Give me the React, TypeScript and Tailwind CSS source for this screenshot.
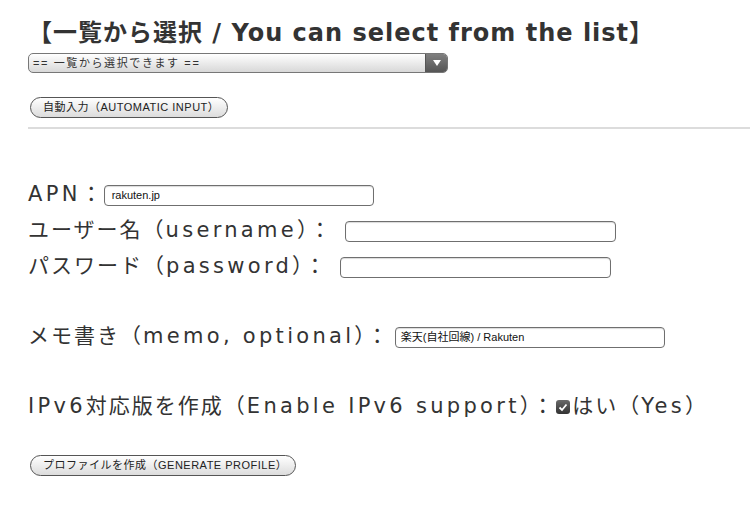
import React from "react";

const labelFont = { fontFamily: '"DejaVu Sans", "Noto Sans CJK JP", sans-serif' };
const ctrlFont = { fontFamily: '"Liberation Sans", "Noto Sans CJK JP", sans-serif' };

function TextBox({ cls, value }: { cls: string; value?: string }) {
  return (
    <div
      className={`${cls} h-[21px] shrink-0 rounded-[4px] border border-[#6f6f6f] bg-white shadow-[inset_0_1px_1px_rgba(0,0,0,0.15)] flex items-center text-[11px] text-[#111] tracking-normal`}
      style={ctrlFont}
    >
      {value}
    </div>
  );
}

function PillButton({ w, children }: { w: string; children: React.ReactNode }) {
  return (
    <div
      className={`${w} h-[21px] rounded-full border border-[#555] bg-gradient-to-b from-white to-[#dcdcdc] flex items-center pl-[12px] text-[11px] tracking-[0.5px] text-[#222] whitespace-nowrap`}
      style={ctrlFont}
    >
      {children}
    </div>
  );
}

function L({ children }: { children: React.ReactNode }) {
  return <span className="tracking-[3.3px]">{children}</span>;
}

export default function App() {
  return (
    <div className="w-[750px] h-[506px] bg-white text-[#333] overflow-hidden" style={labelFont}>
      <div className="pt-[17px] pl-[28px]">
        <h1 className="text-[24px] font-bold leading-[32px] tracking-[1px] whitespace-nowrap">
          【一覧から選択 / You can select from the list】
        </h1>
        <div className="mt-[4px] w-[420px] h-[20px] rounded-[5px] border border-[#777] bg-gradient-to-b from-white to-[#d8d8d8] flex overflow-hidden">
          <div className="flex-1 flex items-center pl-[4px] text-[11px] tracking-[1.6px] text-[#333] whitespace-nowrap" style={ctrlFont}>
            == 一覧から選択できます ==
          </div>
          <div className="w-[22px] h-full bg-gradient-to-b from-[#808080] to-[#555] border-l border-[#555] flex items-center justify-center">
            <svg width="8" height="6" viewBox="0 0 8 6">
              <path d="M0 0 H8 L4 6 Z" fill="#fff" />
            </svg>
          </div>
        </div>
        <div className="mt-[24px] ml-[2px]">
          <PillButton w="w-[198px]">自動入力（AUTOMATIC INPUT）</PillButton>
        </div>
      </div>
      <div className="mt-[9px] ml-[28px] h-[2px] bg-[#dcdcdc]" />

      <div className="pl-[28px] mt-[48px] text-[21px] tracking-[2px] whitespace-nowrap">
        <div className="flex items-center h-[36px]">
          <span>
            <L>APN</L>：
          </span>
          <TextBox cls="ml-[0px] w-[270px] pl-[7px]" value="rakuten.jp" />
        </div>
        <div className="flex items-center h-[36px]">
          <span>
            ユーザー名（<L>username</L>）：
          </span>
          <TextBox cls="ml-[13px] w-[271px]" />
        </div>
        <div className="flex items-center h-[36px]">
          <span>
            パスワード（<L>password</L>）：
          </span>
          <TextBox cls="ml-[12px] w-[271px]" />
        </div>
        <div className="flex items-center h-[36px] mt-[34px]">
          <span>
            メモ書き（<L>memo, optional</L>）：
          </span>
          <TextBox cls="ml-[5px] w-[270px] pl-[5px]" value="楽天(自社回線) / Rakuten" />
        </div>
        <div className="flex items-center h-[36px] mt-[34px]">
          <span>
            <L>IPv6</L>対応版を作成（<L>Enable IPv6 support</L>）：
          </span>
          <span className="ml-[1px] inline-flex shrink-0 w-[14px] h-[14px] rounded-[3px] bg-gradient-to-b from-[#6a6a6a] to-[#333] items-center justify-center">
            <svg width="10" height="9" viewBox="0 0 10 9">
              <path d="M1.5 4.5 L4 7 L8.5 1.5" stroke="#fff" strokeWidth="1.8" fill="none" />
            </svg>
          </span>
          <span className="ml-[2px]">
            はい（<L>Yes</L>）
          </span>
        </div>
      </div>
      <div className="pl-[30px] mt-[30px]">
        <PillButton w="w-[266px]">プロファイルを作成（GENERATE PROFILE）</PillButton>
      </div>
    </div>
  );
}
